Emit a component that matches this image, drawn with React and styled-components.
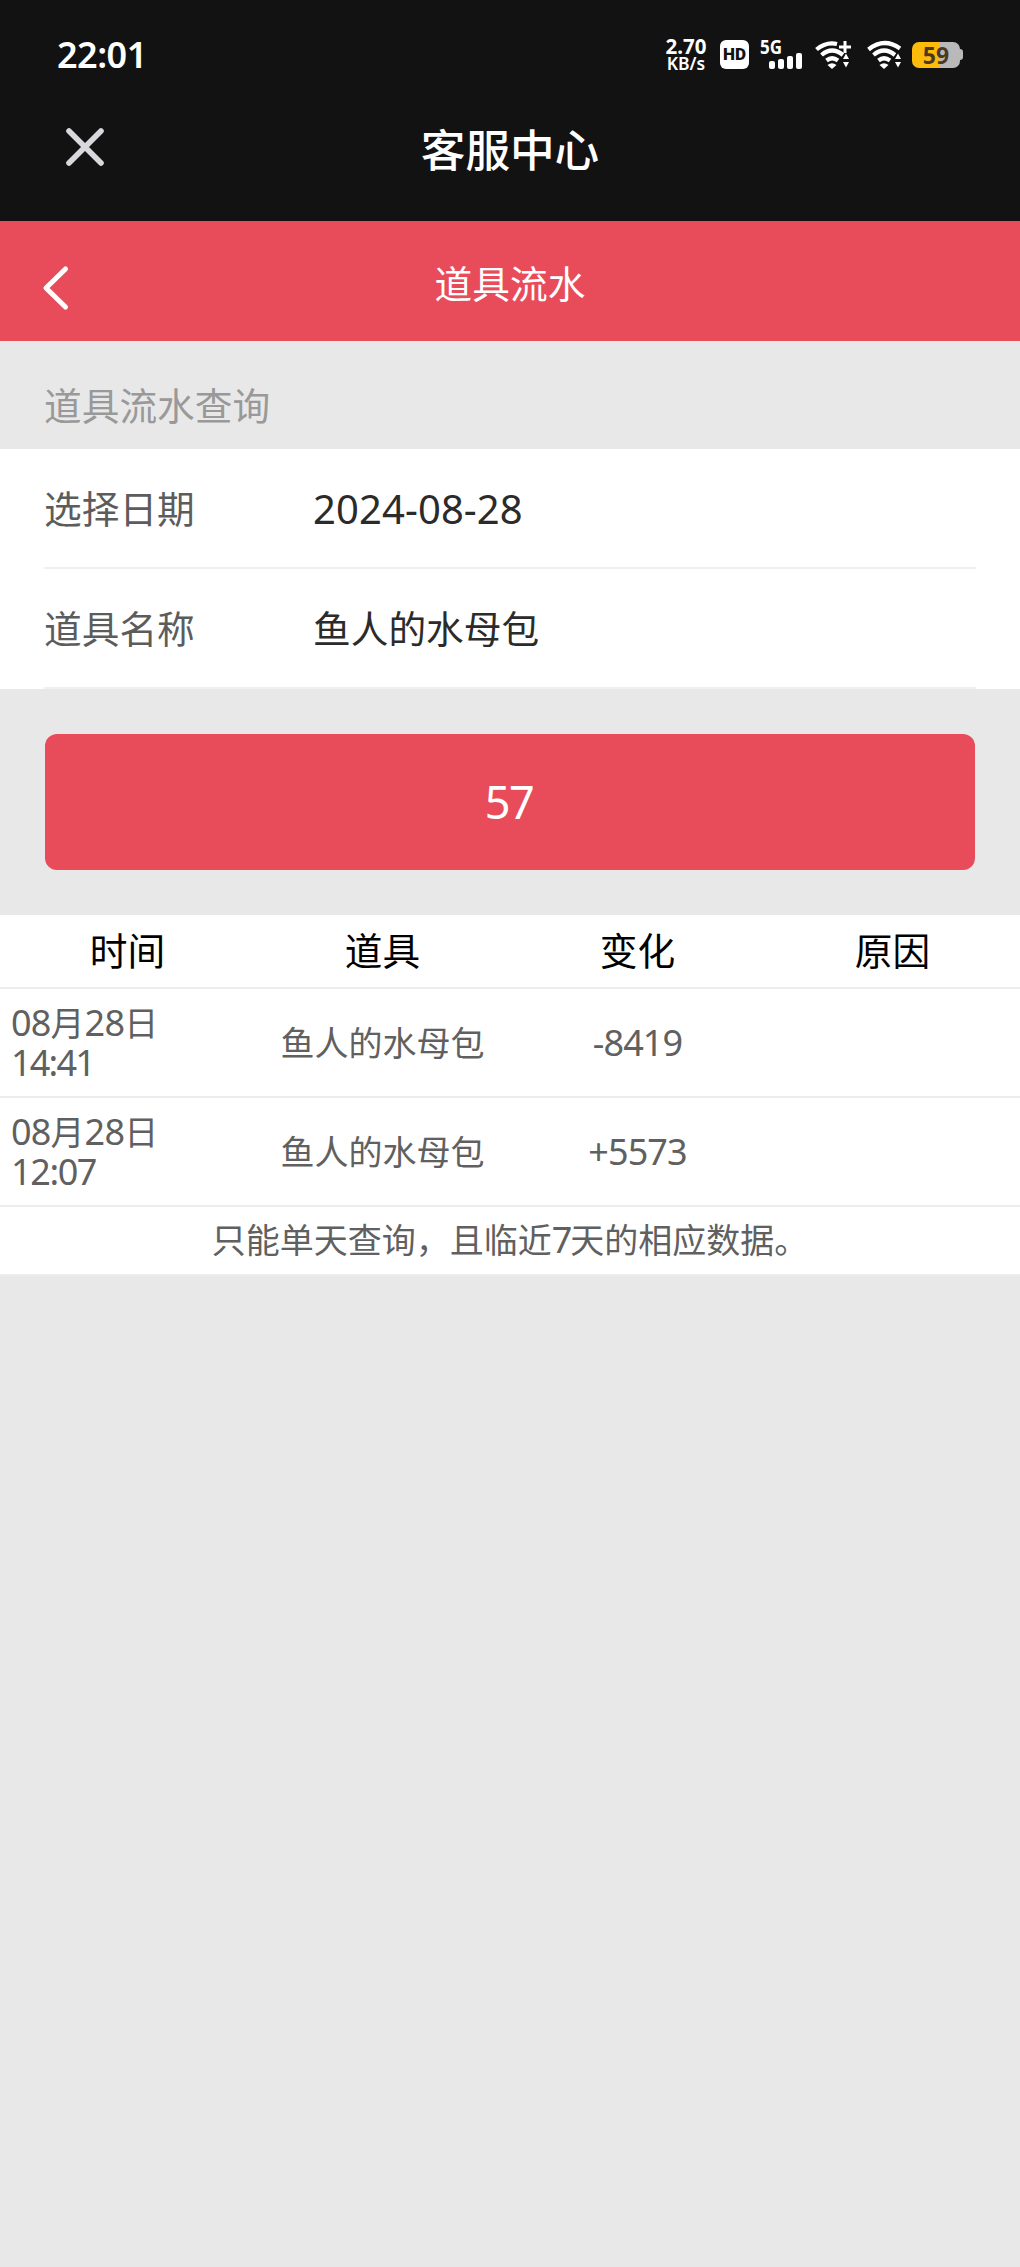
import React from 'react'
import styled, { createGlobalStyle } from 'styled-components'

const red = '#e84c5b'
const line = '#ededed'

const GlobalStyle = createGlobalStyle`
    * {
        box-sizing: border-box;
    }

    body {
        margin: 0;
        background: #e8e8e8;
        font-family: "Noto Sans CJK SC", sans-serif;
        font-weight: 400;
    }
`

const Page = styled.div`
    width: 100%;
    min-height: 2267px;
    background: #e8e8e8;
`

const Num = styled.span`
    font-family: "Noto Sans", "Noto Sans CJK SC", sans-serif;
    font-size: ${props => props.$size}px;
    letter-spacing: ${props => props.$gap || 0}px;
    line-height: 1;
`

const Top = styled.div`
    height: 221px;
    background: #121212;
    color: #fff;
`

const StatusBar = styled.div`
    display: flex;
    align-items: center;
    justify-content: space-between;
    height: 109px;
    padding: 0 57px;
`

const Clock = styled.div`
    font-family: "Noto Sans", sans-serif;
    font-size: 36px;
    font-weight: 600;
    line-height: 36px;
    letter-spacing: -0.5px;
`

const StatusIcons = styled.div`
    display: flex;
    align-items: center;
`

const Speed = styled.div`
    display: flex;
    flex-direction: column;
    align-items: center;
    width: 44px;
    margin-right: 12px;
    font-family: "Noto Sans", sans-serif;
    font-weight: 700;
    font-size: 20.5px;
    line-height: 17px;
    white-space: nowrap;
`

const SpeedUnit = styled.div`
    font-size: 17.5px;
    font-weight: 600;
`

const HdBadge = styled.div`
    width: 29px;
    height: 29px;
    margin-right: 11px;
    border-radius: 6px;
    background: #fff;
    color: #121212;
    font-family: Roboto, sans-serif;
    font-weight: 900;
    font-size: 17px;
    line-height: 29px;
    text-align: center;
`

const Signal = styled.svg`
    width: 43px;
    height: 32px;
    margin-right: 12px;
    overflow: visible;
`

const Wifi = styled.svg`
    width: 36px;
    height: 32px;
    margin-right: ${props => props.$gap}px;
`

const Battery = styled.div`
    display: flex;
    align-items: center;

    &::after {
        content: "";
        width: 3px;
        height: 11px;
        border-radius: 0 3px 3px 0;
        background: #b9b9b9;
    }
`

const BatteryBody = styled.div`
    width: 48px;
    height: 26px;
    border-radius: 7px;
    background: linear-gradient(to right, #fdbb0b 59%, #b9b9b9 59%);
    color: #4b3a22;
    font-family: "Noto Sans", sans-serif;
    font-weight: 700;
    font-size: 23px;
    line-height: 26px;
    text-align: center;
`

const TitleBar = styled.div`
    display: grid;
    grid-template-columns: 170px 1fr 170px;
    align-items: center;
    height: 80px;
`

const CloseIcon = styled.svg`
    width: 40px;
    height: 40px;
    margin: -4px 0 0 65px;
`

const Title = styled.div`
    height: 80px;
    font-size: 44.6px;
    font-weight: 500;
    line-height: 77px;
    text-align: center;
`

const NavBar = styled.div`
    display: grid;
    grid-template-columns: 170px 1fr 170px;
    align-items: center;
    height: 120px;
    background: ${red};
    color: #fff;
`

const BackIcon = styled.svg`
    width: 30px;
    height: 50px;
    margin: 13px 0 0 40px;
`

const NavTitle = styled.div`
    height: 120px;
    font-size: 37.7px;
    line-height: 121px;
    text-align: center;
`

const SectionLabel = styled.div`
    height: 108px;
    padding: 10px 44px 0;
    color: #999;
    font-size: 37.7px;
    line-height: 105px;
`

const Form = styled.div`
    height: 240px;
    padding: 0 44px;
    background: #fff;
`

const Field = styled.div`
    display: flex;
    align-items: center;
    height: 120px;
    padding-bottom: 4px;
    border-bottom: 2px solid #f0f0f0;
    font-size: 37.7px;
`

const FieldName = styled.div`
    width: 269px;
    color: #5c5c5c;
`

const FieldValue = styled.div`
    color: #2b2b2b;
`

const DateValue = styled(FieldValue)`
    padding-top: 2px;
`

const SubmitWrap = styled.div`
    padding: 45px;
`

const Submit = styled.button`
    display: flex;
    align-items: center;
    justify-content: center;
    width: 100%;
    height: 136px;
    padding: 0 2px 2px 0;
    border: 0;
    border-radius: 12px;
    background: ${red};
    color: #fff;
`

const Table = styled.div`
    background: #fff;
    color: #606060;
    font-size: 34px;
`

const Row = styled.div`
    display: grid;
    grid-template-columns: repeat(4, 1fr);
    align-items: center;
    height: 109px;
    padding-bottom: 2px;
    border-bottom: 2px solid ${line};
    text-align: center;
`

const HeadRow = styled(Row)`
    height: 74px;
    padding-bottom: 5px;
    color: #000;
    font-size: 37.7px;
`

const TimeCell = styled.div`
    padding-left: 11px;
    line-height: 40px;
    text-align: left;
`

const TimeLine = styled.div`
    height: 40px;
    white-space: nowrap;
`

const Note = styled.div`
    height: 69px;
    border-bottom: 2px solid ${line};
    line-height: 64px;
    text-align: center;
`

const columns = ['时间', '道具', '变化', '原因']

const records = [
    { time: '14:41', gap: -1.8, item: '鱼人的水母包', change: '-8419', reason: '' },
    { time: '12:07', gap: -1.4, item: '鱼人的水母包', change: '+5573', reason: '' },
]

const WifiIcon = ({ plus, gap }) => (
    <Wifi viewBox="0 0 36 32" $gap={gap}>
        <g fill="none" stroke="#fff" strokeWidth="4.2">
            <path d={plus ? 'M1.5 10.5 Q11 2.5 22 5' : 'M1.5 10.5 Q17 -2 33 9.5'} />
            <path d="M6.5 16 Q17 7 28 16" />
            <path d="M11.5 21.5 Q17 17 23 21.5" />
        </g>
        <path d="M12.5 26 Q17 22.5 21.5 26 L17 30 Z" fill="#fff" />
        <path d="M28 20 L31 14.5 L34 20 Z M28 23 L31 28.5 L34 23 Z" fill="#fff" stroke="#121212" strokeWidth="3" paintOrder="stroke" />
        {plus && <path d="M30 2 V14 M24 8 H36" stroke="#fff" strokeWidth="3" />}
    </Wifi>
)

export default function App() {
    return (
        <Page>
            <GlobalStyle />

            <Top>
                <StatusBar>
                    <Clock>22:01</Clock>

                    <StatusIcons>
                        <Speed>
                            <div>2.70</div>
                            <SpeedUnit>KB/s</SpeedUnit>
                        </Speed>

                        <HdBadge>HD</HdBadge>

                        <Signal viewBox="0 0 43 32">
                            <text x="0" y="15" fill="#fff" fontFamily="Noto Sans" fontWeight="700" fontSize="19" textLength="22" lengthAdjust="spacingAndGlyphs">5G</text>
                            <g fill="#fff">
                                <rect x="9" y="22" width="6" height="8" rx="2" />
                                <rect x="18" y="20" width="6" height="10" rx="2" />
                                <rect x="27" y="17" width="6" height="13" rx="2" />
                                <rect x="36" y="14" width="6" height="16" rx="2" />
                            </g>
                        </Signal>

                        <WifiIcon plus gap={16} />
                        <WifiIcon gap={9} />

                        <Battery>
                            <BatteryBody>59</BatteryBody>
                        </Battery>
                    </StatusIcons>
                </StatusBar>

                <TitleBar>
                    <CloseIcon viewBox="0 0 40 40">
                        <path d="M4 4 L36 36 M36 4 L4 36" stroke="#d9d9dd" strokeWidth="5.6" strokeLinecap="round" />
                    </CloseIcon>
                    <Title>客服中心</Title>
                </TitleBar>
            </Top>

            <NavBar>
                <BackIcon viewBox="0 0 30 50">
                    <path d="M25.5 6 L6 25 L25.5 44" fill="none" stroke="#fff" strokeWidth="5" strokeLinecap="round" strokeLinejoin="round" />
                </BackIcon>
                <NavTitle>道具流水</NavTitle>
            </NavBar>

            <SectionLabel>道具流水查询</SectionLabel>

            <Form>
                <Field>
                    <FieldName>选择日期</FieldName>
                    <DateValue><Num $size={40} $gap={0.1}>2024-08-28</Num></DateValue>
                </Field>
                <Field>
                    <FieldName>道具名称</FieldName>
                    <FieldValue>鱼人的水母包</FieldValue>
                </Field>
            </Form>

            <SubmitWrap>
                <Submit><Num $size={45} $gap={-1.5}>57</Num></Submit>
            </SubmitWrap>

            <Table>
                <HeadRow>
                    {columns.map(name => <div key={name}>{name}</div>)}
                </HeadRow>

                {records.map(record => (
                    <Row key={record.time}>
                        <TimeCell>
                            <TimeLine><Num $size={36} $gap={-0.8}>08</Num>月<Num $size={36} $gap={-0.8}>28</Num>日</TimeLine>
                            <TimeLine><Num $size={36} $gap={record.gap}>{record.time}</Num></TimeLine>
                        </TimeCell>
                        <div>{record.item}</div>
                        <div><Num $size={36} $gap={-0.9}>{record.change}</Num></div>
                        <div>{record.reason}</div>
                    </Row>
                ))}

                <Note>只能单天查询，且临近<Num $size={36} $gap={-2}>7</Num>天的相应数据。</Note>
            </Table>
        </Page>
    )
}
